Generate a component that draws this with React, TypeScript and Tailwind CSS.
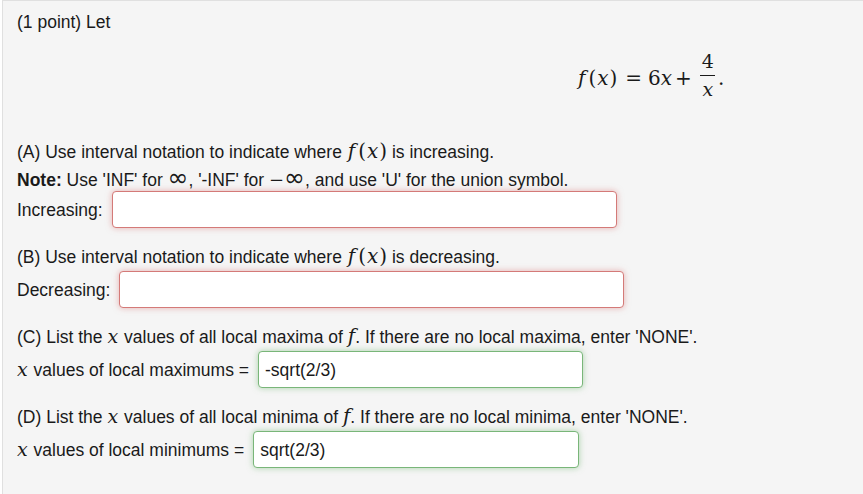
import React from "react";

const serif = "font-['DejaVu_Serif',serif]";

const MathF = () => (
  <span className={serif + " italic text-[20px] leading-none ml-px"}>
    <span className="pr-[3px]">f</span>
    <span className="not-italic">(</span>
    <span className="px-[1px]">x</span>
    <span className="not-italic">)</span>
  </span>
);
const MathX = () => (
  <span className={serif + " italic text-[19px] leading-none pr-[1px]"}>x</span>
);
const Inf = () => (
  <span className="font-['DejaVu_Sans',sans-serif] text-[25px] leading-none">∞</span>
);

const redInput =
  "h-[37px] rounded-[4px] border border-[#d47a78] bg-white shadow-[0_0_6px_rgba(217,120,120,0.55)]";
const greenInput =
  "h-[37px] rounded-[4px] border border-[#79b679] bg-white shadow-[0_0_6px_rgba(110,180,110,0.55)] flex items-center px-[6px] text-[17.5px] text-[#1a1a1a]";

export default function App() {
  return (
    <div className="w-[863px] h-[494px] bg-white overflow-hidden">
      <div className="ml-[2px] h-full bg-[#f5f5f5] border-l border-t border-[#e0e0e0] pl-[14px] pt-[8px] font-['Liberation_Sans',Arial,sans-serif] text-[17.5px] text-[#1a1a1a] leading-[26px]">
        <div className="h-[26px]">(1 point) Let</div>
        <div className="h-[86px] flex items-center pl-[561px]">
          <span className={serif + " text-[20px] flex items-center"}>
            <span className="italic pr-[3px]">f</span>(<span className="italic px-px">x</span>)
            <span className="ml-[8px] mr-[6px]">=</span>6<span className="italic">x</span>
            <span className="ml-[3px] mr-[8px]">+</span>
            <span className="inline-flex flex-col items-center text-[19px] leading-[19px] mb-[6px]">
              <span className="px-[2px]">4</span>
              <span className="w-[15px] h-px bg-[#1a1a1a] my-[4px]"></span>
              <span className="italic px-[2px]">x</span>
            </span>
            <span className="ml-[2px]">.</span>
          </span>
        </div>
        <div className="mt-[18px] h-[26px]">
          (A) Use interval notation to indicate where <MathF /> is increasing.
        </div>
        <div className="h-[26px]">
          <b>Note:</b> Use 'INF' for <Inf />, '-INF' for{" "}
          <span className={serif + " text-[18px]"}>−</span>
          <Inf />, and use 'U' for the union symbol.
        </div>
        <div className="flex items-center">
          <span className="mr-[9px]">Increasing:</span>
          <div className={redInput + " w-[505px]"}></div>
        </div>

        <div className="mt-[16px] h-[26px]">
          (B) Use interval notation to indicate where <MathF /> is decreasing.
        </div>
        <div className="flex items-center mt-px">
          <span className="mr-[9px]">Decreasing:</span>
          <div className={redInput + " w-[505px]"}></div>
        </div>

        <div className="mt-[16px] h-[26px]">
          (C) List the <MathX /> values of all local maxima of{" "}
          <span className={serif + " italic text-[20px] leading-none"}>f</span>. If there are no local maxima, enter 'NONE'.
        </div>
        <div className="flex items-center mt-px">
          <span className="mr-[9px]">
            <MathX /> values of local maximums =
          </span>
          <div className={greenInput + " w-[325px]"}>-sqrt(2/3)</div>
        </div>

        <div className="mt-[16px] h-[26px]">
          (D) List the <MathX /> values of all local minima of{" "}
          <span className={serif + " italic text-[20px] leading-none"}>f</span>. If there are no local minima, enter 'NONE'.
        </div>
        <div className="flex items-center mt-px">
          <span className="mr-[9px]">
            <MathX /> values of local minimums =
          </span>
          <div className={greenInput + " w-[326px]"}>sqrt(2/3)</div>
        </div>
      </div>
    </div>
  );
}
